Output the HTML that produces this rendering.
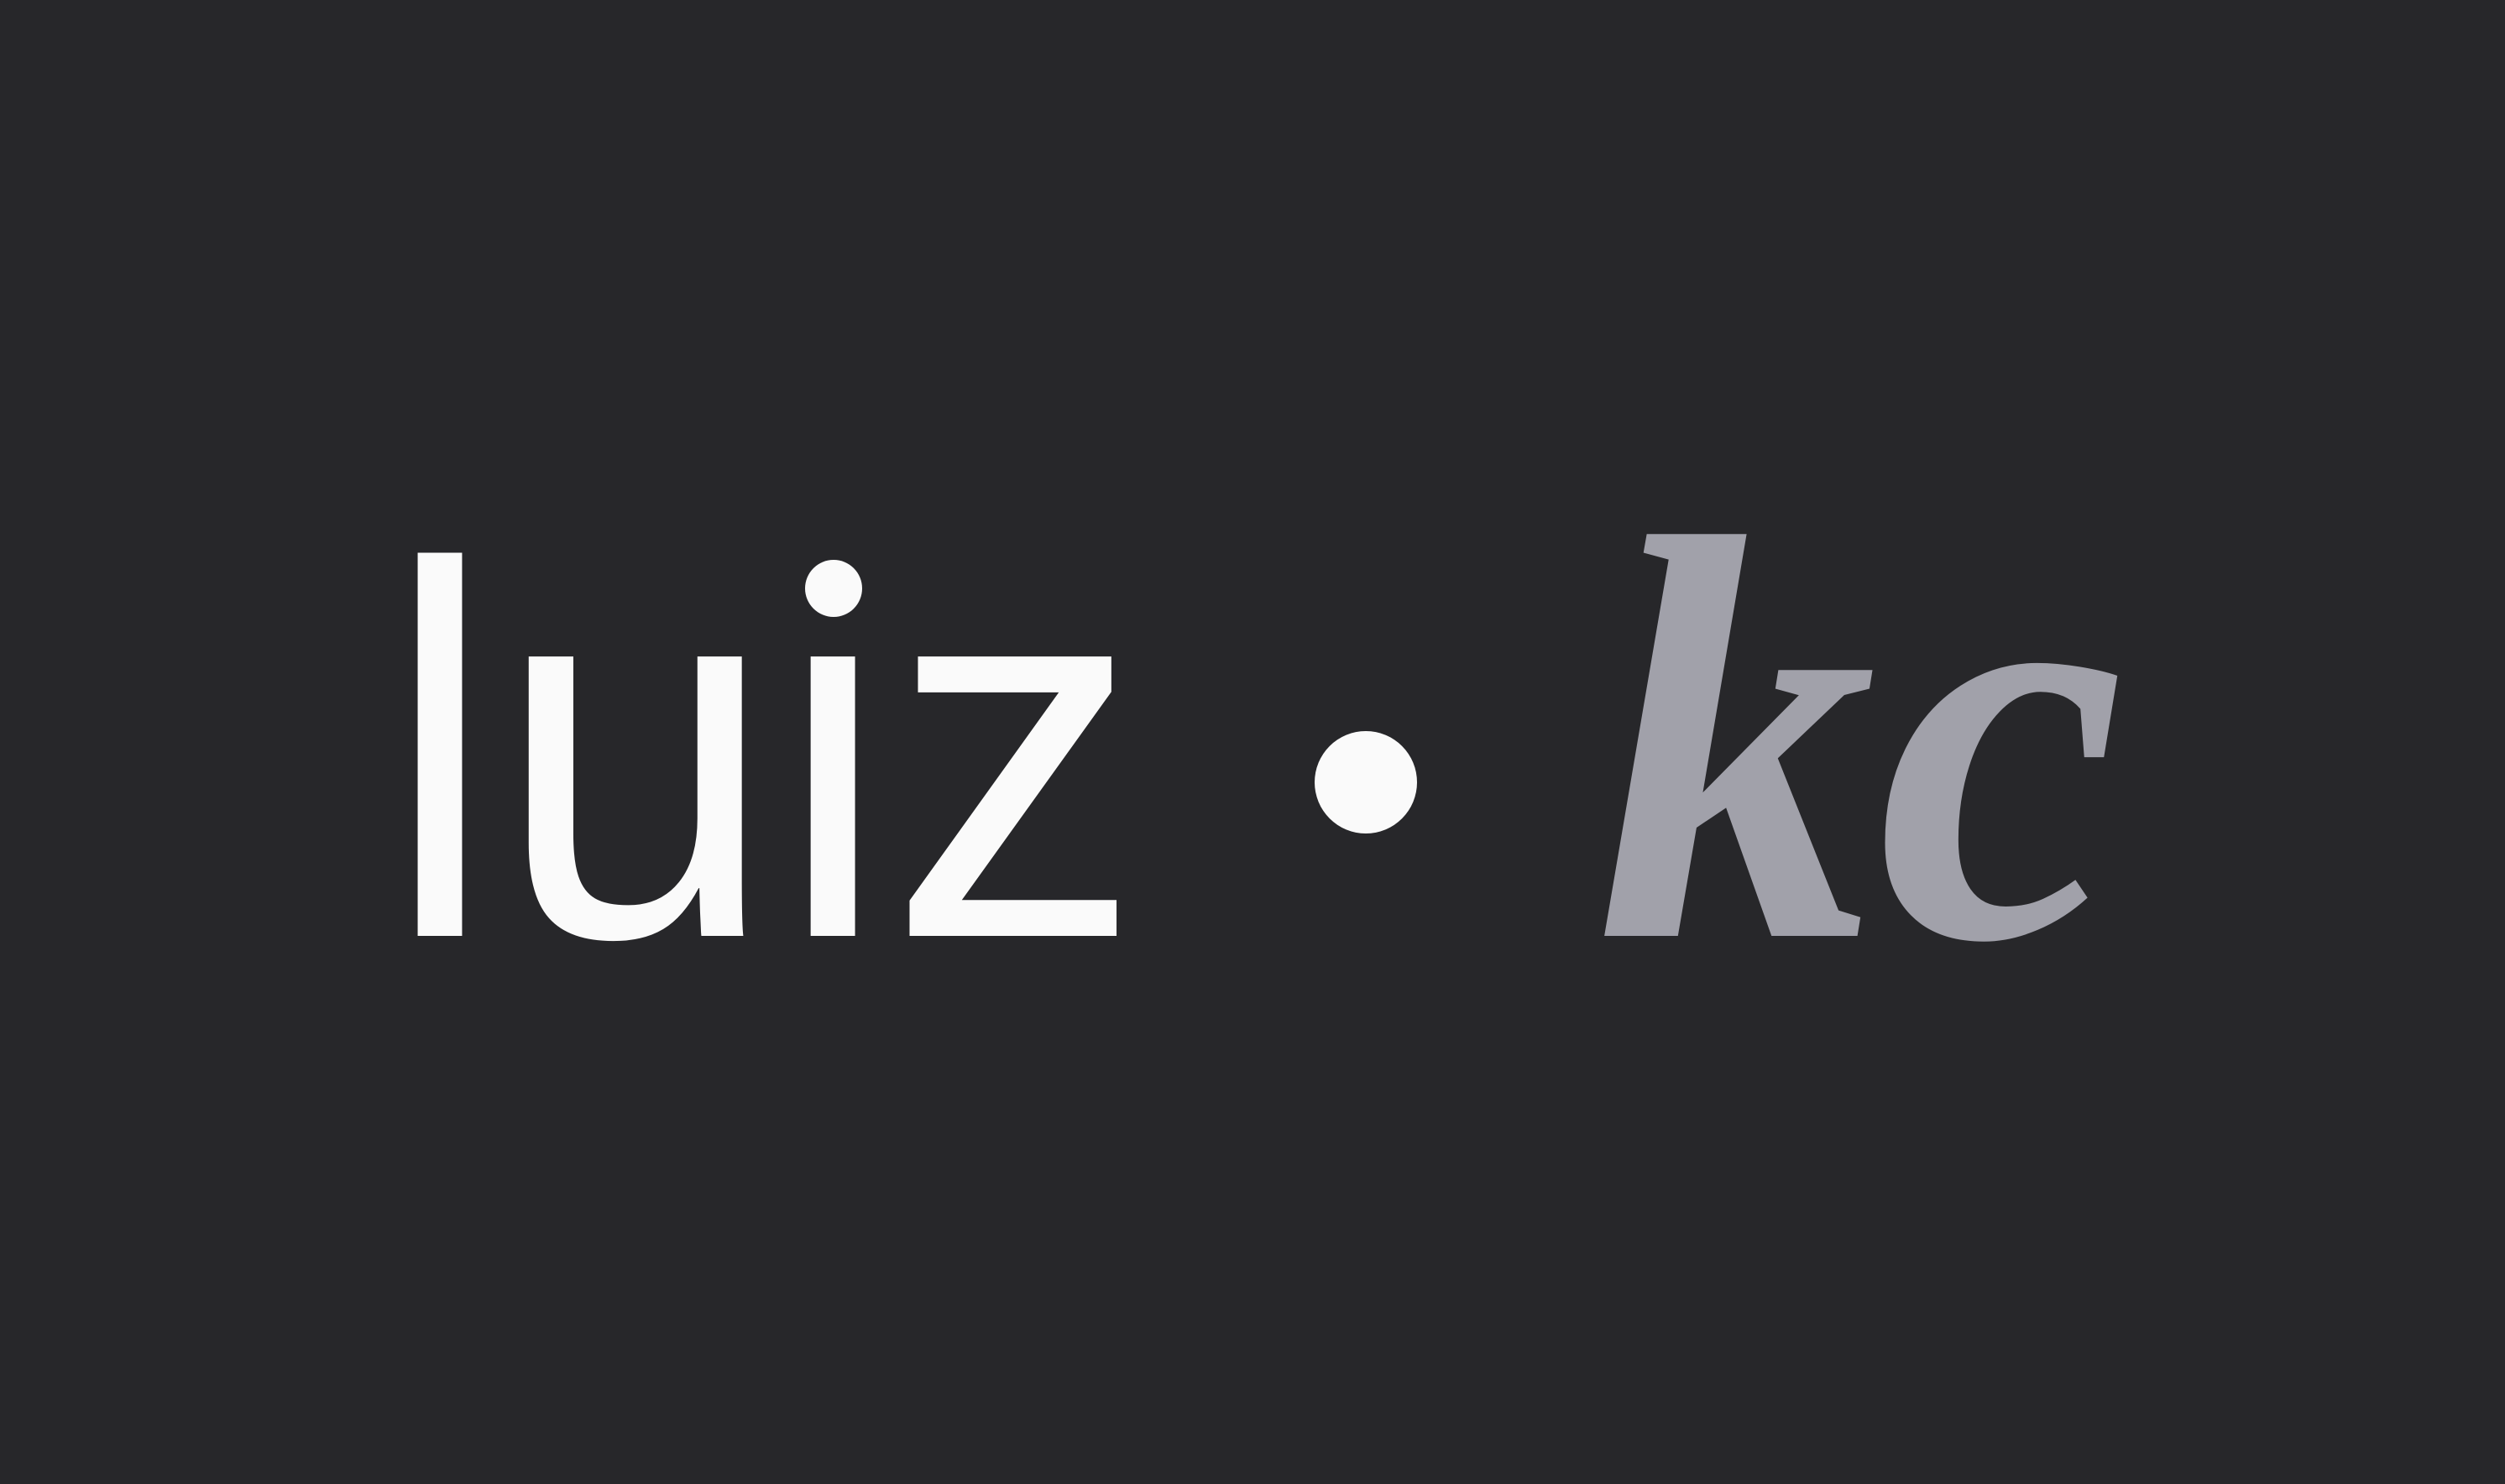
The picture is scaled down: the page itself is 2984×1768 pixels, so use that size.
<!DOCTYPE html>
<html><head><meta charset="utf-8"><style>
html,body{margin:0;padding:0;background:#27272a;width:2984px;height:1768px;overflow:hidden}
</style></head><body>
<svg width="2984" height="1768" viewBox="0 0 2984 1768" xmlns="http://www.w3.org/2000/svg">
<rect width="2984" height="1768" fill="#27272a"/>
<text x="457" y="1115" font-family="Liberation Sans, sans-serif" font-size="630" fill="#fafafa" textLength="903" lengthAdjust="spacingAndGlyphs">luiz</text>
<rect x="955" y="650" width="75" height="70" fill="#27272a"/>
<circle cx="993" cy="701" r="34" fill="#fafafa"/>
<circle cx="1627" cy="932" r="61" fill="#fafafa"/>
<text x="1902" y="1115" font-family="Liberation Serif, serif" font-style="italic" font-weight="bold" font-size="690" fill="#a1a1aa" textLength="630" lengthAdjust="spacingAndGlyphs">kc</text>
</svg>
</body></html>
